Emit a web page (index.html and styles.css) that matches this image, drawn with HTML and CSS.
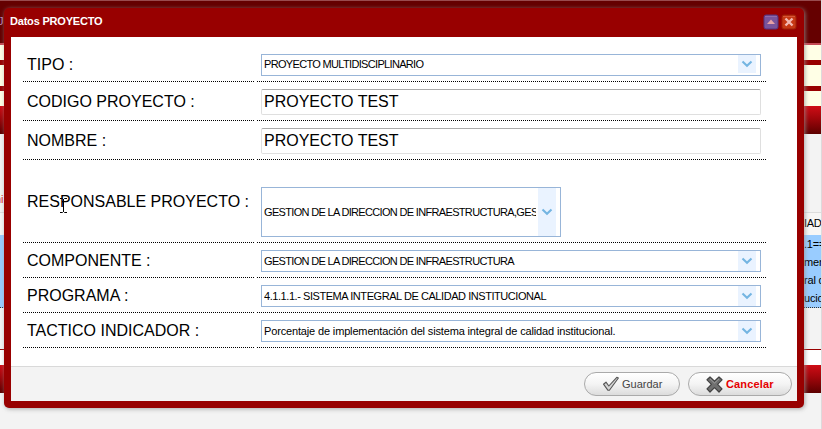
FILE: index.html
```html
<!DOCTYPE html>
<html lang="es">
<head>
<meta charset="utf-8">
<title>Datos PROYECTO</title>
<link rel="stylesheet" href="styles.css">
</head>
<body>
<svg width="0" height="0" class="defs" aria-hidden="true">
  <symbol id="chevron" viewBox="0 0 12 8"><path d="M1.5 1.5 L6 5.7 L10.5 1.5" fill="none" stroke="#74b5e2" stroke-width="2.1"/></symbol>
</svg>
<div class="page">
  <div class="banner"><span class="bannertext">J</span></div>
  <div class="bands"><i></i><i class="tall"></i><i></i></div>
  <div class="bar"></div>
  <div class="gap"><span class="redtext">ni</span></div>
  <div class="thead"><span>IADO</span></div>
  <div class="selected"><div class="cell">.1==<br>men<br>ral d<br>ucio</div></div>
  <div class="rest"></div>
  <div class="white"></div>
  <div class="bar"></div>
</div>

<div class="dialog">
  <div class="titlebar">
    <span>Datos PROYECTO</span>
    <div class="tools">
      <svg width="16" height="16" viewBox="0 0 16 16"><rect x="1" y="1" width="14" height="14" rx="2" fill="#79549b" stroke="#55337d"/><path d="M2 2.5h12" stroke="#916caa"/><path d="M4 10L8 5.5L12 10z" fill="#e8a1a5"/></svg>
      <svg width="16" height="16" viewBox="0 0 16 16"><rect x="1" y="1" width="14" height="14" rx="2" fill="#c63814" stroke="#9f2106"/><path d="M2 2.5h12" stroke="#d75536"/><path d="M4.5 4.5L11.5 11.5M11.5 4.5L4.5 11.5" stroke="#f3b8b2" stroke-width="2.4"/></svg>
    </div>
  </div>
  <div class="form">
    <div class="row"><div class="label">TIPO :</div><div class="field"><div class="select caps"><span>PROYECTO MULTIDISCIPLINARIO</span><b><svg width="12" height="8"><use href="#chevron"/></svg></b></div></div></div>
    <div class="row"><div class="label">CODIGO PROYECTO :</div><div class="field"><div class="input">PROYECTO TEST</div></div></div>
    <div class="row"><div class="label">NOMBRE :</div><div class="field"><div class="input">PROYECTO TEST</div></div></div>
    <div class="row big"><div class="label">RESPONSABLE PROYECTO :</div><div class="field"><div class="select multi caps"><span>GESTION DE LA DIRECCION DE INFRAESTRUCTURA,GESTION</span><b><svg width="12" height="8"><use href="#chevron"/></svg></b></div></div></div>
    <div class="row"><div class="label">COMPONENTE :</div><div class="field"><div class="select caps"><span>GESTION DE LA DIRECCION DE INFRAESTRUCTURA</span><b><svg width="12" height="8"><use href="#chevron"/></svg></b></div></div></div>
    <div class="row"><div class="label">PROGRAMA :</div><div class="field"><div class="select code"><span>4.1.1.1.- SISTEMA INTEGRAL DE CALIDAD INSTITUCIONAL</span><b><svg width="12" height="8"><use href="#chevron"/></svg></b></div></div></div>
    <div class="row"><div class="label">TACTICO INDICADOR :</div><div class="field"><div class="select prose"><span>Porcentaje de implementación del sistema integral de calidad institucional.</span><b><svg width="12" height="8"><use href="#chevron"/></svg></b></div></div></div>
  </div>
  <div class="footer">
    <div class="button save">
      <svg width="18" height="16" viewBox="0 0 18 16"><path d="M1.5 8.2L4 6.2L6.8 10L14.8 1.3L16.4 2L7.4 14.3L6 14.3z" fill="#d4d4d4" stroke="#555" stroke-width="1.1" stroke-linejoin="round"/></svg>
      <span>Guardar</span>
    </div>
    <div class="button cancel">
      <svg width="17" height="17" viewBox="0 0 17 17"><path d="M4 1L8.5 5.3L13 1L16 3.8L11.6 8.3L16 12.8L13 16L8.5 11.6L4 16L1 12.8L5.4 8.3L1 3.8z" fill="#707070" stroke="#424242" stroke-width="1.2" stroke-linejoin="round"/><path d="M4 2.8L8.5 7L13 2.8" fill="none" stroke="#a0a0a0"/></svg>
      <span>Cancelar</span>
    </div>
  </div>
</div>
<svg class="cursor" width="9" height="17" viewBox="0 0 9 17"><path d="M1 1.5h2.5l1 1l1-1H8M4.5 2v13M1 15.5h2.5l1-1l1 1H8" fill="none" stroke="#000"/></svg>
</body>
</html>
```

FILE: styles.css
```css
* { box-sizing: border-box; }
body {
  margin: 0;
  width: 822px;
  height: 429px;
  overflow: hidden;
  position: relative;
  background: #f3f3f3;
  font-family: "Liberation Sans", Arial, sans-serif;
  color: #000;
}
.defs { position: absolute; }

/* page behind the dialog */
.page { height: 429px; border-right: 1px solid #ded9db; }
.banner { height: 45px; background: #650000; border-top: 1px solid #994b4e; border-bottom: 2px solid #c34a55; }
.bannertext { display: block; padding-top: 13px; margin-left: -2px; font-size: 11px; line-height: 14px; color: #b98cc0; }
.bands { height: 61px; background: #980000; display: flex; flex-direction: column; gap: 5px; }
.bands i { height: 15px; background: #ffffe6; }
.bands i.tall { height: 21px; }
.bar { height: 28px; background: linear-gradient(#cf0d16, #a0060b 45%, #5c0000); }
.gap { height: 79px; border-bottom: 1px solid #ddd; }
.redtext { display: block; padding-top: 58px; margin-left: -5px; font-size: 11px; line-height: 14px; color: #e02020; }
.thead { height: 22px; background: #f7f6f5; font-size: 11px; line-height: 20px; padding-left: 804px; letter-spacing: -.3px; overflow: hidden; white-space: nowrap; }
.selected { height: 73px; background: #99ccff; border-bottom: 1px dotted #333; padding-left: 804px; overflow: hidden; }
.cell { font-size: 11px; line-height: 18px; letter-spacing: -.2px; white-space: nowrap; }
.rest { height: 42px; border-bottom: 1px solid #980000; }
.white { height: 15px; background: #fff; }

/* dialog */
.dialog {
  position: absolute;
  left: 4px;
  top: 8px;
  width: 800px;
  height: 400px;
  padding: 0 7px 7px;
  display: flex;
  flex-direction: column;
  background: #980000;
  border-radius: 5px;
  box-shadow: 1px 1px 4px rgba(150, 150, 150, .8);
}
.titlebar {
  height: 29px;
  display: flex;
  justify-content: space-between;
  padding: 6px 0 0;
  margin-left: -1px;
  color: #fff;
  font: bold 11px/14px "Liberation Sans", Arial, sans-serif;
  letter-spacing: -.2px;
}
.tools { display: flex; gap: 2px; }
.form { flex: 1; padding: 10px 31px 0 12px; background: #fff; }
.row { display: flex; gap: 3px; }
.label {
  width: 231px;
  display: flex;
  align-items: center;
  padding: 2px 0 0 4px;
  border-bottom: 1px dotted #000;
  font-size: 16px;
  line-height: 18px;
  white-space: nowrap;
}
.field { width: 509px; padding: 7px 5px 5px 4px; border-bottom: 1px dotted #000; }
.select {
  width: 500px;
  height: 22px;
  display: flex;
  align-items: center;
  border: 1px solid #98b5d8;
  padding: 0 4px 0 2px;
  font-size: 11px;
}
.select span { flex: 1; min-width: 0; overflow: hidden; white-space: nowrap; line-height: 14px; }
.caps span { letter-spacing: -.67px; }
.code span { letter-spacing: -.44px; }
.prose span { letter-spacing: -.15px; }
.select b {
  width: 18px;
  height: 100%;
  margin-left: 2px;
  background: #eaf3ff;
  display: flex;
  align-items: center;
  justify-content: center;
}
.row:first-child .select b { height: 18px; align-self: flex-start; }
.row:first-child .select span { margin-top: -2px; }
.big .field { padding-top: 27px; }
.select.multi { width: 300px; height: 50px; }
.input {
  width: 500px;
  height: 26px;
  padding-left: 2px;
  border: 1px solid #dfdfdf;
  border-top-color: #ababab;
  border-radius: 2px;
  font-size: 16px;
  line-height: 24px;
}
.footer {
  height: 35px;
  display: flex;
  justify-content: flex-end;
  gap: 8px;
  padding: 5px 5px 0 0;
  background: #f3f3f3;
  border-top: 1px solid #d9d9d9;
}
.button {
  height: 24px;
  display: flex;
  align-items: center;
  padding-left: 17px;
  border: 1px solid #aaa;
  border-radius: 12px;
  background: linear-gradient(#fff, #f4f4f4 50%, #dcdcdc);
}
.button span { padding-bottom: 1px; font-size: 11px; }
.save { width: 96px; color: #444; }
.save span { margin-left: 2px; }
.cancel { width: 104px; color: #e60000; font-weight: bold; }
.cancel span { margin-left: 3px; letter-spacing: .15px; }

.cursor { position: absolute; left: 59px; top: 197px; }
```
